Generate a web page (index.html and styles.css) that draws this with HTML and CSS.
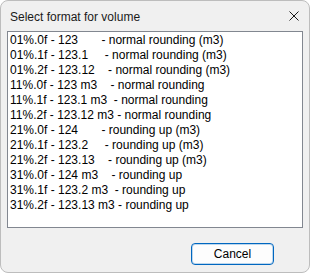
FILE: index.html
```html
<!DOCTYPE html>
<html lang="en">
<head>
  <meta charset="UTF-8" />
  <title>Select format for volume</title>
  <link rel="stylesheet" href="styles.css">
</head>
<body>
  <div class="dialog">
    <div class="titlebar">
      <span class="title">Select format for volume</span>
      <svg class="close" width="10" height="10" viewBox="0 0 10 10">
        <path d="M0.5 0.5 L9.5 9.5 M9.5 0.5 L0.5 9.5" stroke="#1a1a1a" stroke-width="1" fill="none"/>
      </svg>
    </div>

    <ul class="listbox">
      <li>01%.0f - 123       - normal rounding (m3)</li>
      <li>01%.1f - 123.1     - normal rounding (m3)</li>
      <li>01%.2f - 123.12    - normal rounding (m3)</li>
      <li>11%.0f - 123 m3    - normal rounding</li>
      <li>11%.1f - 123.1 m3  - normal rounding</li>
      <li>11%.2f - 123.12 m3 - normal rounding</li>
      <li>21%.0f - 124       - rounding up (m3)</li>
      <li>21%.1f - 123.2     - rounding up (m3)</li>
      <li>21%.2f - 123.13    - rounding up (m3)</li>
      <li>31%.0f - 124 m3    - rounding up</li>
      <li>31%.1f - 123.2 m3  - rounding up</li>
      <li>31%.2f - 123.13 m3 - rounding up</li>
    </ul>

    <div class="buttons">
      <button>Cancel</button>
    </div>
  </div>
</body>
</html>
```

FILE: styles.css
```css
* { box-sizing: border-box; }

body {
  margin: 0;
  background: #ffffff;
  font-family: 'Segoe UI', 'Liberation Sans', Arial, sans-serif;
  font-size: 12px;
  color: #000;
}

.dialog {
  width: 310px;
  height: 273px;
  background: #f0f0f0;
  border: 1px solid #bdbdbd;
  border-radius: 8px;
  overflow: hidden;
}

.titlebar {
  height: 30px;
  display: flex;
  align-items: center;
  justify-content: space-between;
  padding: 2px 10px 0 9px;
}

.title {
  color: #1a1a1a;
}

.close {
  display: block;
  margin-top: -2px;
}

.listbox {
  list-style: none;
  margin: 0 6px;
  padding: 1px 0;
  height: 197px;
  background: #fff;
  border: 1px solid #828790;
}

.listbox li {
  height: 15px;
  line-height: 15px;
  padding-left: 2px;
  white-space: pre;
}

.buttons {
  display: flex;
  justify-content: flex-end;
  padding: 15px 35px 0 0;
}

button {
  width: 83px;
  height: 22px;
  font-family: inherit;
  font-size: 12px;
  color: #000;
  background: #fdfdfd;
  border: 1px solid #0067c0;
  box-shadow: inset 0 0 0 1px rgba(0, 103, 192, 0.25);
  border-radius: 4px;
  padding: 0;
}
```
